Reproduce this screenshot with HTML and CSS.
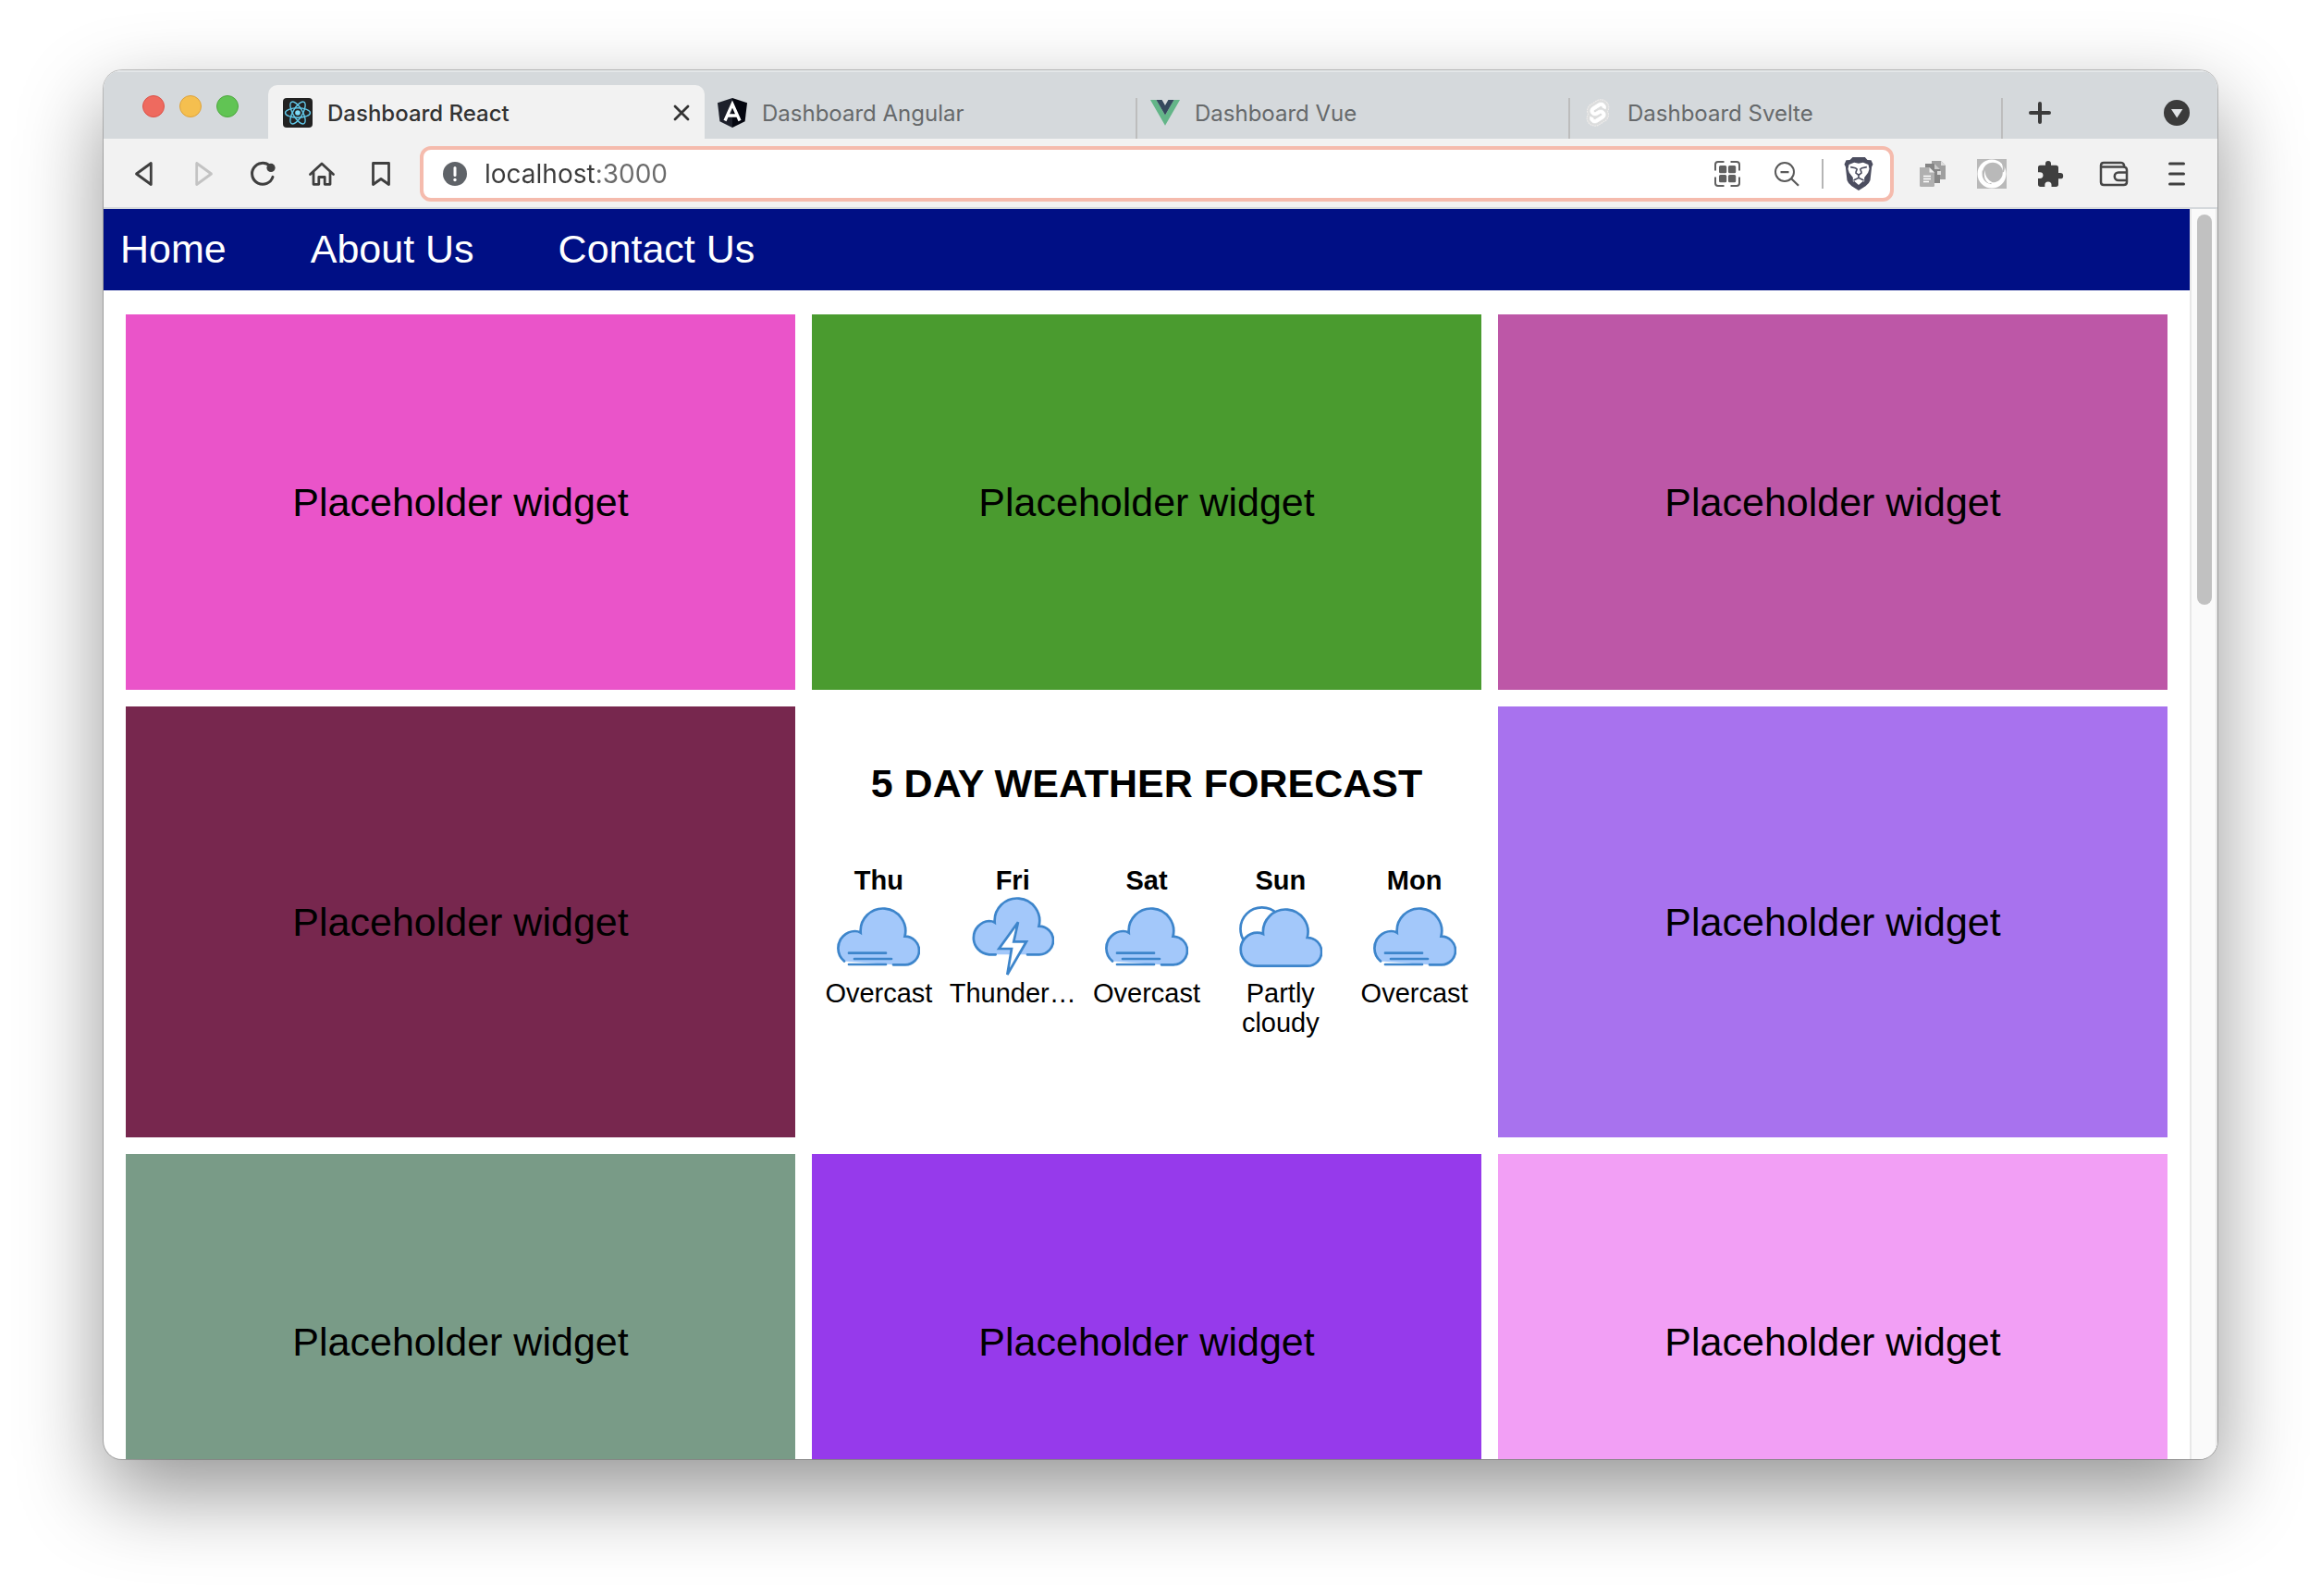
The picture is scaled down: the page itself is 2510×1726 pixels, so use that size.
FILE: index.html
```html
<!DOCTYPE html>
<html lang="en">
<head>
<meta charset="utf-8">
<title>Dashboard React</title>
<link rel="stylesheet" href="styles.css">
</head>
<body>
<div class="window">
  <header class="tab-strip">
    <div class="lights">
      <button class="light light-close" aria-label="Close window"></button>
      <button class="light light-min" aria-label="Minimise window"></button>
      <button class="light light-max" aria-label="Maximise window"></button>
    </div>
    <div class="tabs">
      <div class="tab tab-active">
        <button class="tab-label">
          <svg class="favicon" viewBox="0 0 32 32" aria-hidden="true"><rect width="32" height="32" rx="4" fill="#222"/><g fill="none" stroke="#61c8e8" stroke-width="1.4"><ellipse cx="16" cy="16" rx="13.5" ry="5.2"/><ellipse cx="16" cy="16" rx="13.5" ry="5.2" transform="rotate(60 16 16)"/><ellipse cx="16" cy="16" rx="13.5" ry="5.2" transform="rotate(120 16 16)"/></g><circle cx="16" cy="16" r="2.8" fill="#7fdcf8"/></svg>
          <span>Dashboard React</span>
        </button>
        <button class="tab-close" aria-label="Close tab"><svg width="18" height="18" viewBox="0 0 18 18"><path d="M2 2l14 14M16 2L2 16" stroke="#333" stroke-width="2.8" stroke-linecap="round"/></svg></button>
      </div>
      <div class="tab">
        <button class="tab-label">
          <svg class="favicon" viewBox="0 0 32 32" aria-hidden="true"><path d="M16 0L0 5.3l2.4 20L16 32z" fill="#1d202b"/><path d="M16 0l16 5.3-2.4 20L16 32z" fill="#04060f"/><path d="M8 24.500L16 6.500l8 18M11.500 19h9" fill="none" stroke="#fff" stroke-width="3.300"/></svg>
          <span>Dashboard Angular</span>
        </button>
      </div>
      <div class="tab">
        <button class="tab-label">
          <svg class="favicon" viewBox="0 -2 32 32" aria-hidden="true"><path d="M0 0h6.400L16 16.600 25.600 0H32L16 27.700z" fill="#63b588"/><path d="M6.400 0h6.200L16 6 19.400 0h6.200L16 16.600z" fill="#35495e"/></svg>
          <span>Dashboard Vue</span>
        </button>
      </div>
      <div class="tab">
        <button class="tab-label">
          <svg class="favicon" viewBox="-1.500 -1.500 27 27" aria-hidden="true"><path d="M20.685 3.160c-2.225-3.184-6.618-4.127-9.795-2.102L5.310 4.610A6.400 6.400 0 0 0 2.420 8.900a6.750 6.750 0 0 0 .665 4.336 6.400 6.400 0 0 0-.956 2.396 6.830 6.830 0 0 0 1.166 5.164c2.225 3.184 6.618 4.128 9.795 2.103l5.580-3.557a6.400 6.400 0 0 0 2.890-4.287 6.750 6.750 0 0 0-.665-4.336 6.400 6.400 0 0 0 .956-2.395 6.820 6.820 0 0 0-1.167-5.164z" fill="#dcdddd" stroke="#eeeceb" stroke-width=".9" stroke-dasharray="1.600 .6"/><path fill="#fff" stroke="#fff" stroke-width=".7" d="M10.354 21.125a4.440 4.440 0 0 1-4.765-1.767 4.109 4.109 0 0 1-.703-3.107 3.898 3.898 0 0 1 .134-.522l.105-.321.287.21a7.210 7.210 0 0 0 2.186 1.092l.208.063-.02.208a1.253 1.253 0 0 0 .226.83 1.337 1.337 0 0 0 1.435.533 1.231 1.231 0 0 0 .343-.15l5.590-3.562a1.164 1.164 0 0 0 .524-.778 1.242 1.242 0 0 0-.211-.937 1.338 1.338 0 0 0-1.435-.533 1.230 1.230 0 0 0-.343.15l-2.133 1.360a4.078 4.078 0 0 1-1.135.499 4.440 4.440 0 0 1-4.765-1.766 4.108 4.108 0 0 1-.702-3.108 3.855 3.855 0 0 1 1.742-2.582l5.589-3.563a4.072 4.072 0 0 1 1.135-.499 4.440 4.440 0 0 1 4.765 1.767 4.109 4.109 0 0 1 .703 3.107 3.943 3.943 0 0 1-.134.522l-.105.321-.286-.21a7.204 7.204 0 0 0-2.187-1.093l-.208-.063.02-.207a1.255 1.255 0 0 0-.226-.831 1.337 1.337 0 0 0-1.435-.532 1.231 1.231 0 0 0-.343.15L8.620 9.368a1.162 1.162 0 0 0-.524.778 1.240 1.240 0 0 0 .211.937 1.338 1.338 0 0 0 1.435.533 1.235 1.235 0 0 0 .344-.151l2.132-1.360a4.067 4.067 0 0 1 1.135-.498 4.440 4.440 0 0 1 4.765 1.766 4.108 4.108 0 0 1 .702 3.108 3.857 3.857 0 0 1-1.742 2.583l-5.589 3.562a4.072 4.072 0 0 1-1.135.499"/></svg>
          <span>Dashboard Svelte</span>
        </button>
      </div>
    </div>
    <div class="strip-actions">
      <button class="icon-button" aria-label="New tab"><svg width="24" height="24" viewBox="0 0 24 24"><path d="M12 2v20M2 12h20" stroke="#3b3b3b" stroke-width="4" stroke-linecap="round"/></svg></button>
      <button class="icon-button" aria-label="Search tabs"><svg width="28" height="28" viewBox="0 0 28 28"><circle cx="14" cy="14" r="14" fill="#3b3b3b"/><path d="M8 10h12.400L14.200 19.400z" fill="#e1e4e6"/></svg></button>
    </div>
  </header>

  <div class="toolbar">
    <div class="nav-buttons">
      <button class="icon-button" aria-label="Back"><svg width="32" height="32" viewBox="0 0 32 32"><path d="M7.500 16L23.300 4.500v23z" fill="none" stroke="#3f3f3f" stroke-width="2.800" stroke-linejoin="round"/></svg></button>
      <button class="icon-button" aria-label="Forward" disabled><svg width="32" height="32" viewBox="0 0 32 32"><path d="M24.500 16L8.700 4.500v23z" fill="none" stroke="#c3c3c3" stroke-width="2.800" stroke-linejoin="round"/></svg></button>
      <button class="icon-button" aria-label="Reload"><svg width="32" height="32" viewBox="0 0 32 32"><path d="M23.800 7.300A11.500 11.500 0 1 0 27 19.400" fill="none" stroke="#3f3f3f" stroke-width="3" stroke-linecap="round"/><circle cx="25" cy="9.400" r="4.600" fill="#3f3f3f"/></svg></button>
      <button class="icon-button" aria-label="Home"><svg width="32" height="32" viewBox="0 0 32 32"><path d="M3.500 16.500L16 5l12.500 11.500M7 14.500v12.800h5.800v-7.800h6.400v7.800H25V14.500" fill="none" stroke="#3f3f3f" stroke-width="2.800" stroke-linecap="round" stroke-linejoin="round"/></svg></button>
      <button class="icon-button" aria-label="Bookmark"><svg width="32" height="32" viewBox="0 0 32 32"><path d="M7.500 4.500h17v23L16 21.500 7.500 27.500z" fill="none" stroke="#3f3f3f" stroke-width="2.800" stroke-linejoin="round"/></svg></button>
    </div>
    <div class="address">
      <svg width="26" height="26" viewBox="0 0 26 26" aria-hidden="true"><circle cx="13" cy="13" r="13" fill="#5f6368"/><path d="M13 6.500v8" stroke="#fff" stroke-width="3" stroke-linecap="round"/><circle cx="13" cy="19.500" r="1.700" fill="#fff"/></svg>
      <input class="url" type="text" value="localhost:3000" aria-label="Address">
      <div class="address-actions">
        <button class="icon-button" aria-label="QR code"><svg width="32" height="32" viewBox="0 0 32 32"><path d="M3 12.500V6a3 3 0 0 1 3-3h6.500M19.500 3H26a3 3 0 0 1 3 3v6.500M29 19.500V26a3 3 0 0 1-3 3h-6.500M12.500 29H6a3 3 0 0 1-3-3v-6.500" fill="none" stroke="#606060" stroke-width="2"/><g fill="#606060"><rect x="7" y="7" width="8.200" height="8.200" rx="1.500"/><rect x="17" y="7" width="8.200" height="8.200" rx="1.500"/><rect x="7" y="17" width="8.200" height="8.200" rx="1.500"/><rect x="17" y="17" width="8.200" height="8.200" rx="1.500"/></g></svg></button>
        <button class="icon-button" aria-label="Zoom"><svg width="32" height="32" viewBox="0 0 32 32"><circle cx="14" cy="14" r="10" fill="none" stroke="#5a5a5a" stroke-width="2"/><path d="M9.500 14.200h9M21.200 21.200l7.800 7.600" stroke="#5a5a5a" stroke-width="2.200"/></svg></button>
      </div>
      <span class="divider"></span>
      <button class="icon-button" aria-label="Shields"><svg width="32" height="36" viewBox="0 0 93 108"><path d="M27 0h40l8 9 12 1 6 13-4 8-5 44q-3 10-15 19L46.500 108 24 94Q12 85 9 75L4 31l-4-8L6 10l12-1z" fill="#4b4d5f"/><path d="M15 24l17-7 14.500 3L61 17l17 7 3 14-4 12-12 16 0 13-18.500 15L28 79V66L16 50l-4-12z" fill="#fff"/><path d="M20 32l16 3 5 4-4 11M73 32l-16 3-5 4 4 11" fill="none" stroke="#4b4d5f" stroke-width="5"/><path d="M36 50l10.500 8L57 50M46.500 56v12M30 75l16.500-8L63 75" fill="none" stroke="#4b4d5f" stroke-width="5"/><path d="M30 76l16.500 14L63 76v14L46.500 101 30 90z" fill="#4b4d5f"/></svg></button>
    </div>
    <div class="extensions">
      <button class="icon-button" aria-label="Copy pages"><svg width="32" height="32" viewBox="0 0 32 32"><path d="M15 2h10l5 5v15H15z" fill="#9f9f9f"/><path d="M25 2v5h5z" fill="#ddd"/><path d="M8 5h10l6 6v15H8z" fill="#858585"/><path d="M18 5v6h6z" fill="#ccc"/><path d="M21 13h4v4h-4z" fill="#ddd"/><path d="M2 9h10.500l5.500 5.500V28.500a1.500 1.500 0 0 1-1.500 1.500h-13A1.500 1.500 0 0 1 2 28.500z" fill="#b0b0b0"/><path d="M12.500 9v5.500H18z" fill="#eee"/><path d="M6 18.500h8M6 21.500h8M6 24.500h6" stroke="#fff" stroke-width="1.300"/></svg></button>
      <button class="icon-button" aria-label="Swirl extension"><svg width="32" height="32" viewBox="0 0 32 32"><path d="M0 0h32v32H0z" fill="#b9b9b9"/><circle cx="16" cy="16" r="15.500" fill="#fff"/><circle cx="17" cy="14.500" r="10.800" fill="#b9b9b9"/><path d="M25.500 1q5 6 2.500 13" fill="none" stroke="#b9b9b9" stroke-width="2"/><path d="M6.500 12.500Q5 24 15.500 26.500" fill="none" stroke="#b9b9b9" stroke-width="1.600"/><path d="M8.500 12Q9 22 17 25.500L13 26.500Q6 22 8.500 12z" fill="#fff"/></svg></button>
      <button class="icon-button" aria-label="Extensions"><svg width="32" height="32" viewBox="1 0 24 24"><path d="M20.500 11.200H19V7a2 2 0 0 0-2-2h-4V3.700a2.250 2.250 0 0 0-4.500 0V5H4.500a1.900 1.900 0 0 0-2 2v3.600H4a2.600 2.600 0 0 1 0 5.200H2.500V20.500a2 2 0 0 0 2 2H8V21a2.700 2.700 0 0 1 5.400 0v1.500H17a2 2 0 0 0 2-2v-4.500h1.500a2.400 2.400 0 0 0 0-4.800z" fill="#3f3f3f"/></svg></button>
      <button class="icon-button browser-button" aria-label="Wallet"><svg width="32" height="32" viewBox="0 0 32 32"><path d="M2 10V7q0-3 3-3h19q3 0 3.500 5M2 8v17q0 3 3 3h21.500q3.500 0 3.500-3V12q0-3.500-4-3.500H3M30 14.500h-9a4.200 4.200 0 0 0 0 8.500h9" fill="none" stroke="#454545" stroke-width="2.500"/></svg></button>
      <button class="icon-button browser-button" aria-label="Menu"><svg width="32" height="32" viewBox="0 0 32 32"><path d="M8.500 5h15M8.500 16h15M8.500 27h15" stroke="#3f3f3f" stroke-width="3" stroke-linecap="round"/></svg></button>
    </div>
  </div>

  <div class="viewport">
    <div class="page">
      <nav class="site-nav">
        <a href="#home">Home</a>
        <a href="#about">About Us</a>
        <a href="#contact">Contact Us</a>
      </nav>
      <main class="grid">
        <section class="widget pink">Placeholder widget</section>
        <section class="widget green">Placeholder widget</section>
        <section class="widget orchid">Placeholder widget</section>
        <section class="widget plum">Placeholder widget</section>
        <section class="weather">
          <h2>5 DAY WEATHER FORECAST</h2>
          <div class="days">
            <div class="day"><h3>Thu</h3><svg class="sky" viewBox="0 0 90 90"><use href="#overcast"/></svg><p>Overcast</p></div>
            <div class="day"><h3>Fri</h3><svg class="sky" viewBox="0 0 90 90"><path class="cloud" d="M26.700 64.300H19.700A18.200 18.200 0 0 1 19.700 28Q23 28 25.700 29.700A24.300 24.300 0 1 1 73.500 33.700A15.300 15.300 0 0 1 74 64.300H61"/><path class="outline" d="M51 29.300L30.300 58H44l-4.700 28L60 50.300H46.300z"/></svg><p>Thunder…</p></div>
            <div class="day"><h3>Sat</h3><svg class="sky" viewBox="0 0 90 90"><use href="#overcast"/></svg><p>Overcast</p></div>
            <div class="day"><h3>Sun</h3><svg class="sky" viewBox="0 0 90 90"><circle class="outline" cx="24.700" cy="36.500" r="23.200"/><path class="cloud" d="M19.700 76.700A18 18 0 0 1 19.700 40.700Q23 40.700 26 42A24.300 24.300 0 1 1 73.700 46A15.300 15.300 0 0 1 74 76.700z"/></svg><p>Partly cloudy</p></div>
            <div class="day"><h3>Mon</h3><svg class="sky" viewBox="0 0 90 90"><g id="overcast"><path class="cloud" d="M8 71.500A18.500 18.500 0 0 1 1.400 57.500A18.500 18.500 0 0 1 19.700 39Q23 39 25.700 40.700A24.300 24.300 0 1 1 73.500 44.700A15.300 15.300 0 0 1 89 60A15.300 15.300 0 0 1 74 75.300H61"/><path class="outline" d="M13 62.700h40M19 69h40M13 75h40"/></g></svg><p>Overcast</p></div>
          </div>
        </section>
        <section class="widget lavender">Placeholder widget</section>
        <section class="widget sage">Placeholder widget</section>
        <section class="widget violet">Placeholder widget</section>
        <section class="widget blush">Placeholder widget</section>
      </main>
    </div>
    <div class="scrollbar"><div class="thumb"></div></div>
  </div>
</div>
</body>
</html>
```
FILE: styles.css
```css
* { box-sizing: border-box; }

body {
  margin: 0;
  height: 100vh;
  padding: 76px 112px 148px;
  background: #fff;
  overflow: hidden;
}

h2, h3, p { margin: 0; }

button {
  padding: 0;
  border: 0;
  background: none;
  font: inherit;
  color: inherit;
}

svg { display: block; flex: none; }

.window {
  display: flex;
  flex-direction: column;
  height: 100%;
  border-radius: 20px;
  overflow: hidden;
  background: #fff;
  box-shadow: 0 0 0 1px rgba(0, 0, 0, .22), 0 36px 90px rgba(0, 0, 0, .42);
  font-family: Inter, "Liberation Sans", sans-serif;
}

/* Tab strip */
.tab-strip {
  display: flex;
  flex: none;
  height: 74px;
  padding-right: 30px;
  background: #d5d9dc;
  box-shadow: inset 0 2px #e3e6e8;
}

.lights {
  display: flex;
  gap: 16px;
  flex: none;
  width: 178px;
  padding: 27px 0 0 42px;
}

.light {
  width: 24px;
  height: 24px;
  border: 1px solid #dd5248;
  border-radius: 50%;
  background: #ee6a5f;
}
.light-min { background: #f5bf4f; border-color: #dea23a; }
.light-max { background: #61c454; border-color: #4fa73f; }

.tabs {
  display: flex;
  flex: 1;
  max-width: 1876px;
  padding-top: 16px;
  font-size: 24px;
  font-weight: 400;
  color: #66696b;
}

.tab {
  display: flex;
  flex: 1;
  align-items: center;
  justify-content: space-between;
  padding: 2px 14px 0;
  background: linear-gradient(#bdbdbd, #bdbdbd) right bottom / 2px 44px no-repeat;
}

.tab-active {
  flex-basis: 4px;
  padding: 2px 16px 0;
  border-radius: 10px 10px 0 0;
  background: #f2f2f2;
  font-weight: 500;
  color: #333;
}

.tab-label {
  display: flex;
  align-items: center;
  gap: 16px;
}

.favicon { width: 32px; height: 32px; }

.strip-actions {
  display: flex;
  flex: none;
  align-items: center;
  justify-content: space-between;
  width: 202px;
  margin-left: auto;
  padding: 18px 0 0 28px;
}

/* Toolbar */
.toolbar {
  display: flex;
  flex: none;
  align-items: center;
  height: 76px;
  padding: 2px 28px 0;
  background: #f2f2f2;
  border-bottom: 2px solid #d5d9dc;
}

.nav-buttons {
  display: flex;
  gap: 32px;
  margin-right: 26px;
}

.address {
  display: flex;
  flex: 1;
  align-items: center;
  height: 60px;
  padding: 0 18px 0 21px;
  border: 4px solid #f5bbad;
  border-radius: 12px;
  background: #fff;
}

.url {
  flex: 1;
  min-width: 0;
  height: 40px;
  margin-left: 19px;
  padding: 0;
  border: 0;
  outline: 0;
  font: 400 28px/40px Inter, sans-serif;
  color: transparent;
  background: linear-gradient(90deg, #3b3b3b 122px, #6b6b6b 122px);
  -webkit-background-clip: text;
  background-clip: text;
}

.address-actions { display: flex; gap: 32px; }

.divider {
  width: 2px;
  height: 32px;
  margin: 0 22px;
  background: #b5b5b5;
}

.extensions {
  display: flex;
  gap: 32px;
  margin-left: 26px;
}
.browser-button { margin-left: 4px; }

/* Page */
.viewport {
  display: flex;
  flex: 1;
  min-height: 0;
}

.page {
  flex: 1;
  overflow: hidden;
  font-family: "Liberation Sans", Arial, sans-serif;
  font-size: 43px;
  color: #000;
}

.site-nav {
  display: flex;
  gap: 91px;
  align-items: center;
  height: 88px;
  padding: 0 18px 2px;
  background: #000f85;
}
.site-nav a { color: #fff; text-decoration: none; }

.grid {
  display: grid;
  grid-template-columns: repeat(3, 1fr);
  grid-template-rows: 406px 466px 406px;
  gap: 18px;
  padding: 26px 24px;
}

.widget {
  display: flex;
  align-items: center;
  justify-content: center;
}

.pink { background: #ea54c9; }
.green { background: #4a9b2f; }
.orchid { background: #bd57a7; }
.plum { background: #77274e; }
.lavender { background: #a872ee; }
.sage { background: #799b87; }
.violet { background: #963aeb; }
.blush { background: #f29ff5; }

.weather {
  padding-top: 58px;
  text-align: center;
}
.weather h2 {
  font-size: 43px;
  line-height: 50px;
}

.days {
  display: grid;
  grid-template-columns: repeat(5, 1fr);
  margin-top: 64px;
  font-size: 29px;
  line-height: 32px;
}

.day h3 { font-size: 29px; }

.sky {
  width: 90px;
  height: 90px;
  margin: 0 auto;
}
.cloud, .outline {
  stroke: #3d85cb;
  stroke-width: 2.7px;
  stroke-linecap: round;
}
.cloud { fill: #a3c8fa; }
.outline { fill: #fff; }

/* Scrollbar */
.scrollbar {
  width: 30px;
  padding: 6px 4px 6px 6px;
  border: solid #e8e8e8;
  border-width: 0 2px;
  background: #fafafa;
}
.thumb {
  width: 16px;
  height: 31.5%;
  border-radius: 8px;
  background: #c1c1c1;
}
```
